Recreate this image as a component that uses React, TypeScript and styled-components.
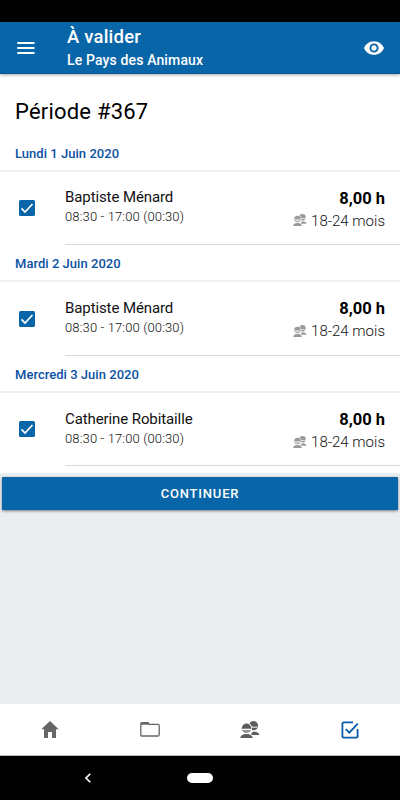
import React from "react";
import styled, { createGlobalStyle } from "styled-components";

const BLUE = "#0866a8";

const GlobalStyle = createGlobalStyle`
  * { box-sizing: border-box; }
  body { margin: 0; background: #000; font-family: Roboto, sans-serif; color: #000; }
`;

const Screen = styled.div`
  display: flex;
  flex-direction: column;
  width: 400px;
  height: 800px;
  overflow: hidden;
  background: #eaeef1;
`;

const StatusBar = styled.div`
  flex: none;
  height: 22px;
  background: #000;
`;

const AppBar = styled.header`
  flex: none;
  display: flex;
  align-items: center;
  height: 52px;
  padding: 0 16px 0 17px;
  background: ${BLUE};
  border-bottom: 1px solid #07559b;
  color: #fff;
  position: relative;
  box-shadow: 0 1px 3px rgba(0, 0, 0, 0.35);
`;

const Titles = styled.div`
  flex: 1;
  padding-left: 32px;
  white-space: nowrap;
`;

const Title = styled.div`
  font-size: 18.5px;
  font-weight: 500;
  line-height: 24px;
  letter-spacing: 0.2px;
`;

const Subtitle = styled.div`
  font-size: 14px;
  font-weight: 500;
  line-height: 22px;
  letter-spacing: 0.14px;
`;

const Content = styled.main`
  flex: none;
  height: 399px;
  background: #fff;
`;

const Heading = styled.h1`
  margin: 0;
  height: 60.3px;
  padding: 24px 0 0 15px;
  font-size: 22px;
  font-weight: 400;
  line-height: 27px;
  letter-spacing: 0.2px;
`;

const DateLabel = styled.h2`
  margin: 0;
  height: 37.5px;
  padding: 10.5px 0 0 15px;
  border-bottom: 2px solid #eeefef;
  font-size: 13px;
  font-weight: 500;
  line-height: 18px;
  letter-spacing: 0.03px;
  color: #0b51a4;
`;

const Entry = styled.div`
  display: flex;
  height: 73.2px;
  padding-left: 19px;
`;

const CheckBox = styled.span`
  flex: none;
  display: flex;
  width: 16px;
  height: 16px;
  margin-top: 28.1px;
  border-radius: 1.5px;
  background: ${BLUE};
`;

const EntryBody = styled.div`
  flex: 1;
  display: flex;
  justify-content: space-between;
  margin-left: 30px;
  padding-right: 15px;
  border-bottom: 1px solid #d9dbdc;
  white-space: nowrap;
`;

const Person = styled.div`
  padding-top: 15.7px;
`;

const Name = styled.div`
  font-size: 15px;
  line-height: 21px;
  letter-spacing: -0.1px;
  color: #111;
`;

const Hours = styled.div`
  font-size: 13px;
  font-weight: 300;
  line-height: 18px;
  letter-spacing: 0.13px;
  color: #111;
`;

const Summary = styled.div`
  padding-top: 16px;
  text-align: right;
`;

const Total = styled.div`
  font-size: 16.5px;
  font-weight: 700;
  line-height: 22px;
`;

const AgeGroup = styled.div`
  display: flex;
  align-items: center;
  justify-content: flex-end;
  gap: 4px;
  font-size: 15px;
  font-weight: 300;
  line-height: 23px;
  color: #111;

  svg {
    margin-bottom: 2px;
  }
`;

const ContinueButton = styled.button`
  flex: none;
  height: 33px;
  margin: 4px 2px 0;
  padding: 0;
  border: 0;
  border-radius: 1px;
  background: ${BLUE};
  box-shadow: 0 1px 3px rgba(0, 0, 0, 0.5);
  color: #fff;
  font: 500 13px/33px Roboto, sans-serif;
  letter-spacing: 0.8px;
`;

const TabBar = styled.nav`
  flex: none;
  display: grid;
  grid-template-columns: repeat(4, 1fr);
  height: 52px;
  margin-top: auto;
  border-bottom: 1px solid #bbb;
  background: #fff;
`;

const Tab = styled.a<{ $active?: boolean }>`
  display: flex;
  align-items: center;
  justify-content: center;
  color: ${(p) => (p.$active ? "#0a5cab" : "#666")};
`;

const SystemBar = styled.div`
  flex: none;
  display: flex;
  align-items: center;
  height: 44px;
  padding-left: 85px;
  background: #000;
`;

const HomePill = styled.span`
  width: 26px;
  height: 10px;
  margin-left: 96px;
  border-radius: 5px;
  background: #fff;
`;

function PeopleIcon({ width, height, color }: { width: number; height: number; color: string }) {
  return (
    <svg width={width} height={height} viewBox="0 0 20 17" fill={color}>
      <circle cx="13.500" cy="4.700" r="4.600" />
      <path d="M11 5.600h6.600v1.200H11z" fill="#fff" opacity=".8" />
      <path d="M11 14c0-2.500 1.700-3 3.200-3.600 2.700.5 4.500 1.200 5.300 3.600z" />
      <circle cx="6.500" cy="7.200" r="5.500" fill="#fff" />
      <path d="M-.5 17.500c1-4 3-5.500 7-5.500s6 1.500 7 5.500z" fill="#fff" />
      <circle cx="6.500" cy="7.200" r="4.700" />
      <path d="M2.200 7.700h8.600v1.300H2.200z" fill="#fff" />
      <path d="M2.200 9h8.600c-.7 1.700-2.300 2.900-4.300 2.900S2.900 10.700 2.200 9z" fill="#fff" opacity=".35" />
      <path d="M.2 17c.6-2.800 2.600-3.600 4.800-4.100l1.500.4 1.500-.4c2.200.5 4.200 1.300 4.800 4.100z" />
    </svg>
  );
}

const days = [
  { date: "Lundi 1 Juin 2020", name: "Baptiste Ménard" },
  { date: "Mardi 2 Juin 2020", name: "Baptiste Ménard" },
  { date: "Mercredi 3 Juin 2020", name: "Catherine Robitaille" },
];

export default function App() {
  return (
    <Screen>
      <GlobalStyle />
      <StatusBar />
      <AppBar>
        <svg width="18" height="12" viewBox="0 0 18 12" fill="#fff">
          <path d="M0.300 0h17.200v1.900H.3zM.3 5h17.200v1.900H.3zM.3 10h17.200v1.900H.3z" />
        </svg>
        <Titles>
          <Title>À valider</Title>
          <Subtitle>Le Pays des Animaux</Subtitle>
        </Titles>
        <svg width="20" height="14" viewBox="1 4.500 22 15" fill="#fff">
          <path d="M12 4.500C7 4.500 2.730 7.610 1 12c1.730 4.390 6 7.500 11 7.500s9.270-3.110 11-7.500c-1.730-4.390-6-7.500-11-7.500zM12 17c-2.760 0-5-2.240-5-5s2.240-5 5-5 5 2.240 5 5-2.240 5-5 5zm0-8c-1.660 0-3 1.340-3 3s1.340 3 3 3 3-1.340 3-3-1.340-3-3-3z" />
        </svg>
      </AppBar>
      <Content>
        <Heading>Période #367</Heading>
        {days.map((day) => (
          <section key={day.date}>
            <DateLabel>{day.date}</DateLabel>
            <Entry>
              <CheckBox>
                <svg width="16" height="16" viewBox="0 0 16 16" fill="none" stroke="#fff" strokeWidth="1.700">
                  <path d="M2.500 8.300l3.500 3.700 7.500-8" />
                </svg>
              </CheckBox>
              <EntryBody>
                <Person>
                  <Name>{day.name}</Name>
                  <Hours>08:30 - 17:00 (00:30)</Hours>
                </Person>
                <Summary>
                  <Total>8,00 h</Total>
                  <AgeGroup>
                    <PeopleIcon width={14} height={12} color="#999" />
                    18-24 mois
                  </AgeGroup>
                </Summary>
              </EntryBody>
            </Entry>
          </section>
        ))}
      </Content>
      <ContinueButton>CONTINUER</ContinueButton>
      <TabBar>
        <Tab>
          <svg width="18" height="17" viewBox="0 0 18 17" fill="currentColor">
            <path d="M9 0L.3 8.300H3V17h4v-6h4v6h4V8.300h2.700z" />
          </svg>
        </Tab>
        <Tab>
          <svg width="20" height="15" viewBox="0 0 20 15" fill="none" stroke="currentColor" strokeWidth="1.300">
            <path d="M.8 3V2q0-1.300 1.300-1.300h5.500q.8 0 1.300 1l.3.700h8.700q1.300 0 1.300 1.300v9q0 1.300-1.300 1.300H2.100Q.8 14 .8 12.700z" />
            <path d="M1 1.700h8" strokeWidth="2" />
          </svg>
        </Tab>
        <Tab>
          <PeopleIcon width={20} height={17} color="#5c5c5c" />
        </Tab>
        <Tab $active>
          <svg width="18" height="18" viewBox="0 0 18 18" fill="none" stroke="currentColor" strokeWidth="1.800">
            <path d="M12 1.400H3q-1.600 0-1.600 1.600v12q0 1.600 1.600 1.600h12q1.600 0 1.600-1.600V8" />
            <path d="M4.800 8.200l3.500 3.500 8.500-9" />
          </svg>
        </Tab>
      </TabBar>
      <SystemBar>
        <svg width="6" height="10" viewBox="0 0 6 10" fill="none" stroke="#fff" strokeWidth="1.600">
          <path d="M5.300 .7L1 5l4.300 4.300" />
        </svg>
        <HomePill />
      </SystemBar>
    </Screen>
  );
}
